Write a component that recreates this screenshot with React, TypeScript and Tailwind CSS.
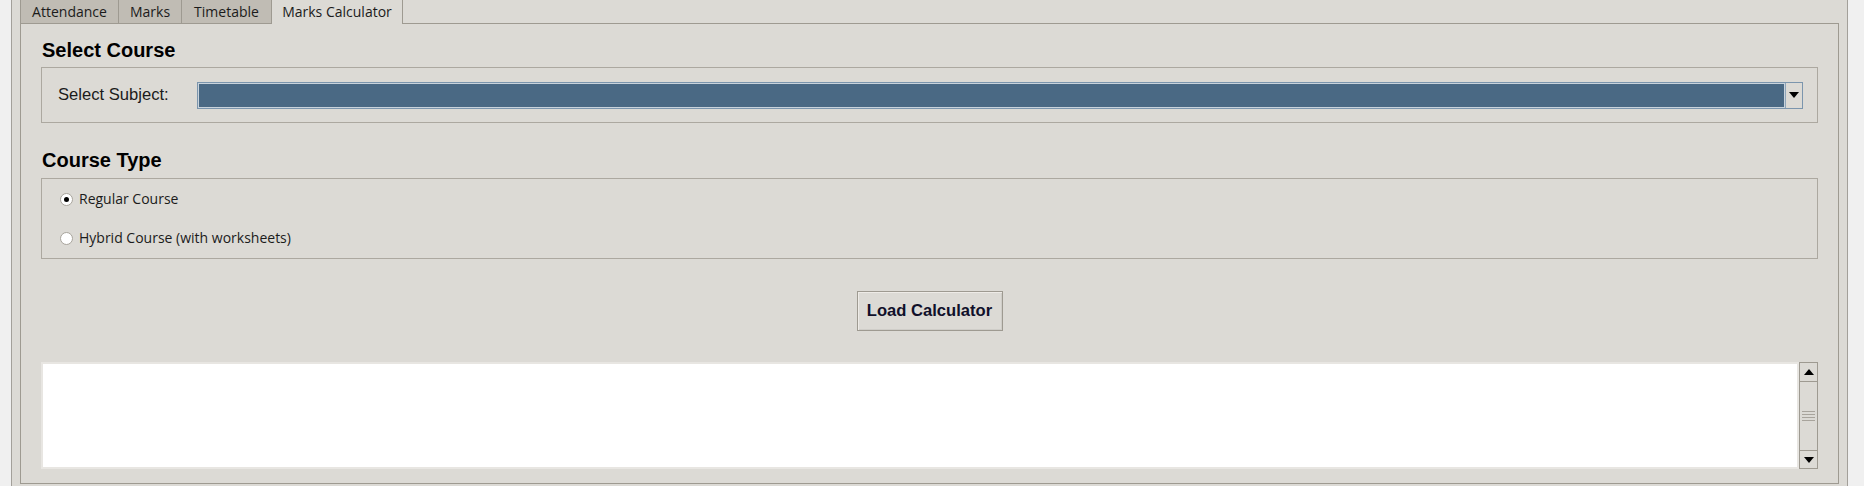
import React from "react";

const tk = { fontFamily: '"Open Sans", "Noto Sans", sans-serif' };
const ar = { fontFamily: '"Liberation Sans", Arial, sans-serif' };

function Tri({ up = false }: { up?: boolean }) {
  return (
    <svg width="10" height="6" viewBox="0 0 10 6">
      {up ? <polygon points="0,6 10,6 5,0" fill="#000" /> : <polygon points="0,0 10,0 5,6" fill="#000" />}
    </svg>
  );
}

function Radio({ checked, label }: { checked: boolean; label: string }) {
  return (
    <div className="flex items-center h-[20px]">
      <div className="w-[13px] h-[13px] rounded-full border border-[#a8a49c] bg-white flex items-center justify-center">
        {checked && <div className="w-[5px] h-[5px] rounded-full bg-black" />}
      </div>
      <span className="ml-[6px] text-[14px] leading-[20px] text-[#1b1b1b]" style={tk}>
        {label}
      </span>
    </div>
  );
}

export default function App() {
  const tabs = [
    { name: "Attendance", w: "w-[99px] border-l", sel: false },
    { name: "Marks", w: "w-[63px]", sel: false },
    { name: "Timetable", w: "w-[90px]", sel: false },
    { name: "Marks Calculator", w: "w-[131px]", sel: true },
  ];
  return (
    <div className="w-[1864px] h-[486px] bg-[#f0f0f0] overflow-hidden flex">
      <div className="ml-[11px] w-[1837px] h-full bg-[#dcdad5] border-l border-r border-[#a3a09a] px-[8px]">
        <div className="w-[1819px] flex flex-col">
          <div className="flex h-[23px] items-start relative z-10">
            {tabs.map((t) => (
              <div
                key={t.name}
                className={`${t.w} border-r border-[#9e9a91] flex items-center justify-center text-[14px] text-[#1b1b1b] ${
                  t.sel ? "h-[24px] bg-[#dcdad5] leading-[23px]" : "h-[23px] bg-[#c0bcb4] leading-[23px]"
                }`}
                style={tk}
              >
                <span className={t.sel ? "-mt-px" : ""}>{t.name}</span>
              </div>
            ))}
          </div>
          <div className="h-[461px] border border-[#9e9a91] bg-[#dcdad5] px-[20px] pt-[14px] flex flex-col">
            <div className="h-[24px] leading-[24px] text-[20px] font-bold text-black pl-[1px]" style={ar}>
              Select Course
            </div>
            <div className="mt-[5px] h-[56px] border border-[#aca8a0] flex items-center pl-[16px] pr-[14px]">
              <div className="w-[139px] text-[16.6px] text-[#1b1b1b]" style={ar}>
                Select Subject:
              </div>
              <div className="flex-1 h-[27px] border border-[#7b95ad] flex">
                <div className="flex-1 border border-[#c9d3dc] bg-[#4a6984]" />
                <div className="w-px bg-[#8fa5b9]" />
                <div className="w-[16px] bg-[#dcdad5] flex items-center justify-center">
                  <Tri />
                </div>
              </div>
            </div>
            <div className="mt-[25px] h-[24px] leading-[24px] text-[20px] font-bold text-black pl-[1px]" style={ar}>
              Course Type
            </div>
            <div className="mt-[6px] h-[81px] border border-[#aca8a0] pt-[10px] pl-[18px] flex flex-col gap-[19px]">
              <Radio checked label="Regular Course" />
              <Radio checked={false} label="Hybrid Course (with worksheets)" />
            </div>
            <div className="mt-[32px] flex justify-center">
              <div
                className="w-[146px] h-[40px] border border-[#9e9a91] bg-[#dcdad5] shadow-[inset_1px_1px_0_#eeebe7,inset_-1px_-1px_0_#cfcdc8] flex items-center justify-center text-[16.6px] font-bold text-[#10102a]"
                style={ar}
              >
                Load Calculator
              </div>
            </div>
            <div className="mt-[31px] h-[107px] flex">
              <div className="flex-1 border-2 border-[#e8e6e2] bg-white" />
              <div className="w-[19px] flex flex-col">
                <div className="h-[20px] border border-[#9e9a91] bg-[#dcdad5] flex items-center justify-center">
                  <Tri up />
                </div>
                <div className="flex-1 border-x border-[#9e9a91] bg-[#dcdad5] flex flex-col items-center justify-center gap-[2px]">
                  <div className="w-[13px] h-px bg-[#a8a49c]" />
                  <div className="w-[13px] h-px bg-[#a8a49c]" />
                  <div className="w-[13px] h-px bg-[#a8a49c]" />
                  <div className="w-[13px] h-px bg-[#a8a49c]" />
                </div>
                <div className="h-[19px] border border-[#9e9a91] bg-[#dcdad5] flex items-center justify-center">
                  <Tri />
                </div>
              </div>
            </div>
          </div>
        </div>
      </div>
    </div>
  );
}
